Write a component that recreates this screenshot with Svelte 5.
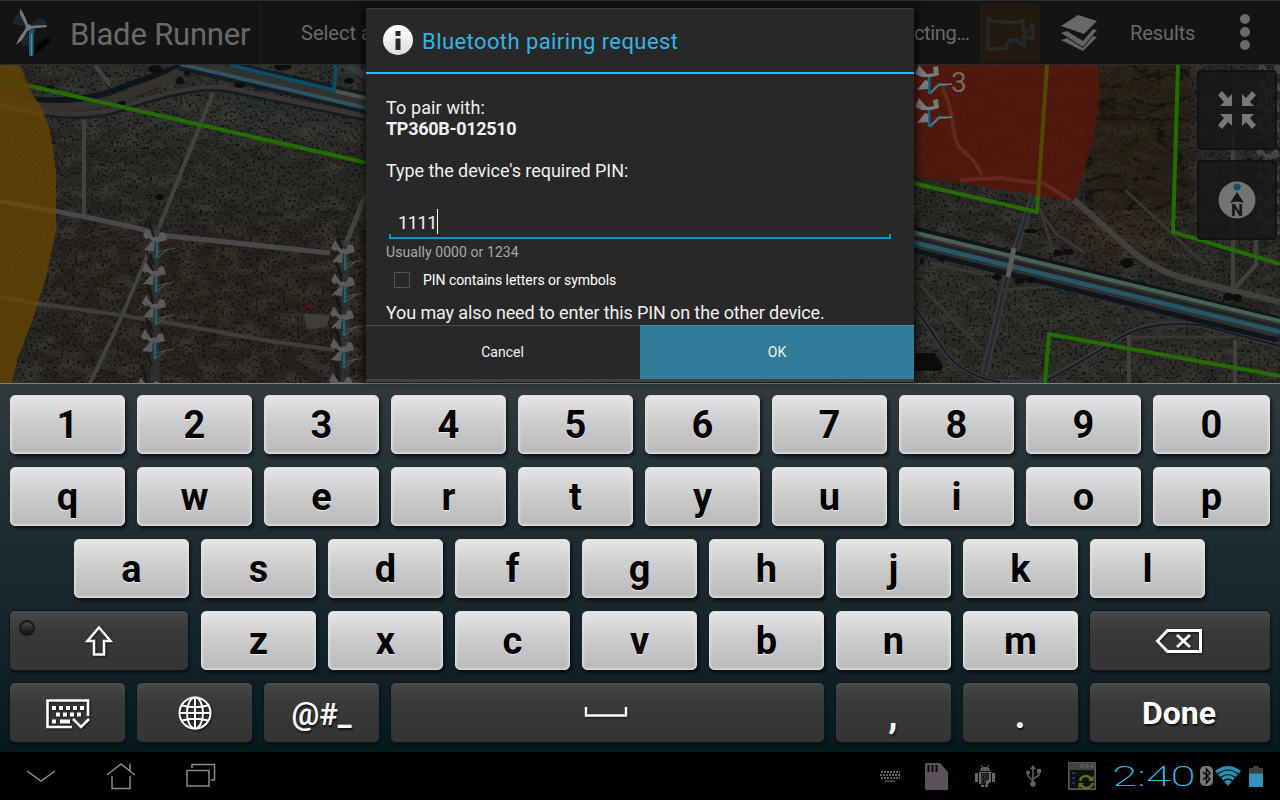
<script>
  const digits = '1234567890'.split('');
  const top = 'qwertyuiop'.split('');
  const home = 'asdfghjkl'.split('');
  const bottom = 'zxcvbnm'.split('');
  const turbines = [
    [155, 233], [154, 267], [154, 300], [153, 334], [149, 382],
    [343, 245], [343, 278], [342, 311], [342, 343], [341, 378]
  ];
  const edgeTurbines = [[1270, 66], [1269, 84], [1268, 104], [1268, 124], [1268, 150], [1268, 174], [1268, 196], [1268, 216]];
  const bushes = [
    [155, 69, 7, 4], [180, 81, 4, 3.5], [187, 73, 3, 2.5], [240, 85, 6, 3], [283, 67, 9, 3], [349, 81, 5, 3],
    [50, 88, 4, 2.5], [122, 103, 4, 2], [160, 197, 4, 3],
    [1031, 231, 7, 2], [1058, 253, 5, 3], [1068, 252, 6, 3], [997, 277, 5, 3], [1020, 281, 5, 3], [1031, 280, 5, 3],
    [1127, 263, 7, 5], [1228, 297, 5, 4], [1237, 298, 5, 4], [942, 259, 4, 2], [922, 261, 2, 4]
  ];
</script>

<div class="screen">
  <header class="appbar">
    <div class="brand">
      <svg class="logo" width="62" height="62" viewBox="0 0 62 62">
        <defs><filter id="soft"><feGaussianBlur stdDeviation="1.4" /></filter></defs>
        <path d="M31 51 48 37" stroke="#050505" stroke-width="5" filter="url(#soft)" />
        <path d="M27 25 12 22Q13 12 20 9ZM28 24 36 17Q44 15 46 23ZM26 27 19 42Q26 45 30 42Z" fill="#20343b" opacity=".6" />
        <path d="M28 29h4.500v24q-2 2-4.500 0z" fill="#19647f" /><path d="M30.500 30v24" stroke="#5c8896" stroke-width="1.200" />
        <path d="M25 24 19 12 19 7 21 9 25 17 27 23ZM28 24 45 23 46 25 36 26 28 27ZM25 26 27 28 21 38 15 43 18 36Z" fill="#777a7b" />
        <circle cx="27.500" cy="25.500" r="3.200" fill="#707476" /><circle cx="31.500" cy="29" r="2.600" fill="#1c4f67" />
      </svg>
      <h1>Blade Runner</h1>
    </div>
    <span class="pick">Select a</span>
    <span class="status">cting…</span>
    <div class="camera">
      <svg width="60" height="60" viewBox="0 0 60 60"><path d="M8 15 12 18 35 20 43 17V26L46 29 51 26V22L53 23V36L46 34 44 32V43L36 37H30L26 42V45L11 46H8Z" fill="none" stroke="#24282b" stroke-width="3.500" stroke-linejoin="round" /></svg>
    </div>
    <svg class="layers" width="38" height="38" viewBox="0 0 38 38">
      <path d="M1 12 18 1 37 7 24 20Z" fill="#686868" />
      <path d="m1 19 6-2 16 10 10-12 4 1-14 17zM1 26l6-2 16 10 10-12 4 1-14 14z" fill="#626262" />
    </svg>
    <span class="results">Results</span>
    <div class="more"><i></i><i></i><i></i></div>
  </header>

  <main class="map">
    <svg width="1280" height="318" viewBox="0 65 1280 318">
      <defs>
        <filter id="dots" x="0" y="0" width="100%" height="100%" color-interpolation-filters="sRGB">
          <feTurbulence type="fractalNoise" baseFrequency=".36" numOctaves="2" seed="8" />
          <feColorMatrix values="0 0 0 0 .06  0 0 0 0 .06  0 0 0 0 .055  6 0 0 0 -3.300" />
        </filter>
        <filter id="light" x="0" y="0" width="100%" height="100%" color-interpolation-filters="sRGB">
          <feTurbulence type="fractalNoise" baseFrequency=".05 .08" numOctaves="5" seed="22" />
          <feColorMatrix values="0 0 0 0 .27  0 0 0 0 .265  0 0 0 0 .235  0 2.500 0 0 -.950" />
        </filter>
        <filter id="ridges" x="0" y="0" width="100%" height="100%" color-interpolation-filters="sRGB">
          <feTurbulence type="turbulence" baseFrequency=".022 .05" numOctaves="4" seed="4" />
          <feColorMatrix values="0 0 0 0 .06  0 0 0 0 .06  0 0 0 0 .05  -7 0 0 0 1.500" />
        </filter>
        <filter id="blur"><feGaussianBlur stdDeviation="9" /></filter>
        <filter id="edge"><feGaussianBlur stdDeviation=".6" /></filter>
        <g id="turbine">
          <path d="M3 24 12 17 20 15M3 19 14 16" stroke="#4b4d4d" stroke-width="1.200" fill="none" />
          <path d="M2 8V25" stroke="#245f7a" stroke-width="2.400" />
          <path d="M-12 3-8-5-5 0-3 3 3 4 6-1 10 0 12 7 4 9-3 8-6 5-9 6ZM-11 17-4 9 0 8-1 18Z" fill="#5a595c" />
          <path d="M-7-16-1 4M-5 20-1 32" stroke="#11171a" stroke-width="1.600" />
        </g>
      </defs>
      <rect y="65" width="1280" height="318" fill="#272622" />
      <g filter="url(#blur)">
        <path d="M55 225H370V383H45Z" fill="#25201b" /><path d="M60 65H370V150L60 130Z" fill="#2b2d2a" />
        <path d="M1090 65h90v170l-80-30z" fill="#272118" /><path d="M914 220 1280 330v53H914z" fill="#292b28" />
        <path d="M1040 210h90l50 40-80 5z" fill="#30281d" />
      </g>
      <rect y="65" width="1280" height="318" filter="url(#light)" opacity=".5" />
      <rect y="65" width="1280" height="318" filter="url(#dots)" opacity=".85" />
      <rect x="1085" y="65" width="105" height="145" fill="#251e12" opacity=".5" />
      <rect x="1085" y="65" width="105" height="145" filter="url(#ridges)" opacity=".8" />

      <g fill="none" filter="url(#edge)">
        <path d="M30 99Q85 105 130 84L185 65" stroke="#11161a" stroke-width="6" />
        <path d="M0 98Q50 114 107 102Q150 88 190 66" stroke="#34332f" stroke-width="8" />
        <path d="M0 104Q65 122 115 110Q190 84 225 88L370 118" stroke="#373631" stroke-width="6" />
        <path d="M0 106Q65 125 115 113Q190 86 225 91L370 121" stroke="#171c20" stroke-width="2.500" />
        <path d="M84 120V215M213 93 160 225 122 316 90 383M95 65 110 85" stroke="#414241" stroke-width="4" />
        <path d="M0 201Q60 211 137 228L160 235 330 253" stroke="#464a48" stroke-width="5" />
        <path d="M35 303 120 315 180 325 270 341 335 350" stroke="#3c3e3c" stroke-width="4" />
        <path d="M365 196 345 246" stroke="#404441" stroke-width="5" />
        <path d="M155 225V383M345 240V383" stroke="#343734" stroke-width="9" opacity=".6" />
        <path d="M345 65 370 78" stroke="#353a3c" stroke-width="6" />
        <path d="M180 60 370 104" stroke="#151d22" stroke-width="21" />
        <path d="M180 60 370 104" stroke="#30312e" stroke-width="10" />
        <path d="M180 64 370 109" stroke="#2d5262" stroke-width="4" />
        <path d="M335 91 370 99" stroke="#44594d" stroke-width="4" />
      </g>
      <path d="M304 314h10l16 1-3 12-20 2z" fill="#3d3e39" /><path d="M306 305h6v3h-6z" fill="#57150f" />
      <path d="M230 65 334 90 336 65" fill="none" stroke="#075069" stroke-width="3.500" />

      <g fill="none" filter="url(#edge)">
        <path d="M1073 199 1138 256Q1160 272 1190 280L1280 302" stroke="#3f413d" stroke-width="6" />
        <path d="M910 300 946 353Q965 377 1000 382H1040Q1060 374 1120 338Q1150 318 1200 325L1280 346" stroke="#33393c" stroke-width="5" />
        <path d="M910 300 946 353Q965 377 1000 382M1042 383Q1070 369 1120 338Q1150 320 1200 325L1280 346" stroke="#171b1d" stroke-width="2" />
        <path d="M984 375 1007 276 1035 190" stroke="#343b3d" stroke-width="7" />
        <path d="M984 375 1007 276 1035 190" stroke="#252b2d" stroke-width="3" />
        <path d="M1129 335V383M1233 130V290M1235 340V383M1256 235V265L1235 288" stroke="#41413e" stroke-width="4" />
        <path d="M1040 208 1053 251M1040 210 1056 234 1085 253M1125 190 1205 264M930 263 985 275M920 285 982 350" stroke="#37362f" stroke-width="3" />
        <path d="M1130 337H1235M1000 290 1055 286" stroke="#353731" stroke-width="3" />
        <path d="M900 236 1280 330" stroke="#0d161b" stroke-width="26" />
        <path d="M900 236 1280 330" stroke="#2e302e" stroke-width="16" />
        <path d="M900 235 1280 327" stroke="#202426" stroke-width="3" />
        <path d="M900 229 1280 321" stroke="#4b6155" stroke-width="4" />
        <path d="M900 239 1280 332" stroke="#285668" stroke-width="4.500" />
        <path d="M1014 248 1008 277" stroke="#5b5d57" stroke-width="5" />
      </g>
      <g fill="#090b09" filter="url(#edge)">
        {#each bushes as [x, y, rx, ry]}<ellipse cx={x} cy={y} {rx} {ry} />{/each}
      </g>
      <path d="M910 353h24l9 12-2 6h-27z" fill="#0c0d0c" />

      <g class="zones">
        <path d="M0 65H20L31 92 42 108 50 130 56 170V231L46 277 33 319 18 357 12 383H0Z" fill="#644304" opacity=".84" />
        <path d="M0 201 56 212M0 297 39 304M0 106 42 115" stroke="#6a5222" stroke-width="4" opacity=".4" />
        <path d="M900 65H1098L1100 96 1093 140 1083 176 1074 201 1050 197 900 174Z" fill="#57160a" opacity=".85" />
        <path d="M942 86Q952 107 953 128L958 146 973 160 982 175M960 180 1000 178 1045 184 1070 200" fill="none" stroke="#773025" stroke-width="4" opacity=".6" />
      </g>
      <g fill="none" stroke="#246c02" stroke-width="4">
        <path d="M30 86 372 164M900 180 1037 212 1038 196M1178 65 1173 232 1280 264M1045 383 1049 334 1280 376" />
        <path d="M0 79 30 86M1038 198 1047 65" stroke="#504803" />
      </g>
      {#each turbines as [x, y]}<use href="#turbine" {x} {y} />{/each}
      <g opacity=".6">{#each edgeTurbines as [x, y]}<use href="#turbine" {x} {y} />{/each}</g>
      <g stroke-linejoin="round">
        {#each [65, 98] as y}
          <g transform={`translate(915 ${y})`}>
            <path d="M14 11V29M15 29 24 19 32 20" fill="none" stroke="#1c6580" stroke-width="2.600" />
            <path d="M0 9 4 0 9 6 12 9 19 8 18 2 23 1 24 10 17 12 7 12ZM2 25 10 15 13 16 13 24Z" fill="#777a7c" />
            <path d="m16 27 8-7 13-1" fill="none" stroke="#74787a" stroke-width="1.400" />
          </g>
        {/each}
      </g>
      <text x="951" y="92" fill="#77665f" font-size="28">3</text>
    </svg>
    <div class="tools">
      <div class="tool">
        <svg width="38" height="38" viewBox="0 0 38 38" fill="#777">
          <path id="corner" d="M0 4 4 0 10 7 14 3V15H2L6 11Z" /><use href="#corner" transform="matrix(-1 0 0 1 38 0)" /><use href="#corner" transform="matrix(1 0 0 -1 0 38)" /><use href="#corner" transform="matrix(-1 0 0 -1 38 38)" />
        </svg>
      </div>
      <div class="tool">
        <svg width="38" height="38" viewBox="0 0 38 38"><circle cx="19" cy="19" r="18.500" fill="#737373" /><circle cx="19" cy="6" r="3.500" fill="#124e70" /><path d="M19 11 26 22Q19 19 12 22Z" fill="#161616" /><text x="19" y="35" text-anchor="middle" font-size="17" font-weight="800" fill="#161616">N</text></svg>
      </div>
    </div>
  </main>

  <section class="keyboard">
    <div class="row">{#each digits as k}<button class="key">{k}</button>{/each}</div>
    <div class="row">{#each top as k}<button class="key">{k}</button>{/each}</div>
    <div class="row home">{#each home as k}<button class="key">{k}</button>{/each}</div>
    <div class="row">
      <button class="key dark shift" aria-label="Shift"><i class="lamp"></i>
        <svg width="28" height="32" viewBox="0 0 28 32"><path d="M14 2.500 25.500 16H19V29.500H9V16H2.500Z" fill="none" stroke="#fff" stroke-width="2.500" /></svg>
      </button>
      {#each bottom as k}<button class="key">{k}</button>{/each}
      <button class="key dark wide back" aria-label="Delete">
        <svg width="48" height="26" viewBox="0 0 48 26" fill="none" stroke="#fff"><path d="M2.500 13 12.500 2.500H45.500V23.500H12.500Z" stroke-width="3" /><path d="m22 7 13 12M35 7 22 19" stroke-width="3" /></svg>
      </button>
    </div>
    <div class="row">
      <button class="key dark" aria-label="Hide keyboard">
        <svg width="44" height="30" viewBox="0 0 44 30" fill="none" stroke="#fff"><path d="M42 17V1.500H1.500V28H26" stroke-width="2.600" /><path d="M6 9H40" stroke-width="4" stroke-dasharray="4 3" /><path d="M10 15.500H36" stroke-width="4" stroke-dasharray="4 3" /><path d="M6 22.500h4M14 22.500h10" stroke-width="4" /><path d="m27 20 8 8 8-8" stroke-width="2.500" /></svg>
      </button>
      <button class="key dark nudge" aria-label="Language">
        <svg width="34" height="34" viewBox="0 0 34 34" fill="none" stroke="#fff" stroke-width="2"><circle cx="17" cy="17" r="15.500" /><ellipse cx="17" cy="17" rx="8" ry="15.500" /><path d="M17 1.500V32.500M1.500 17H32.500M4 9.500Q17 13 30 9.500M4 24.500Q17 21 30 24.500" /></svg>
      </button>
      <button class="key dark symbols">@#_</button>
      <button class="key dark space" aria-label="Space"><svg width="44" height="12" viewBox="0 0 44 12"><path d="M2 1V9.500H42V1" fill="none" stroke="#fff" stroke-width="2.500" /></svg></button>
      <button class="key dark punct">,</button>
      <button class="key dark punct">.</button>
      <button class="key dark wide done">Done</button>
    </div>
  </section>

  <footer class="system">
    <div class="nav">
      <svg width="30" height="28" viewBox="0 0 30 28"><path d="m1 9 14 10L29 9" /></svg>
      <svg width="30" height="28" viewBox="0 0 30 28"><path d="M1 13 15 2 29 13M6 14V26.500H24V14M24 1.500V9" /></svg>
      <svg width="30" height="28" viewBox="0 0 30 28"><path d="M1 8.500H23V24H1ZM6 6V2.500H28.500V18H25" /></svg>
    </div>
    <div class="tray">
      <svg class="kb" width="20" height="12" viewBox="0 0 20 12" stroke="#626262" fill="none" stroke-width="2"><path d="M1 2H20M0 5H20M1 8H20" stroke-dasharray="2 1" /><path d="M5 11H15" stroke-width="1.300" /></svg>
      <svg class="sd" width="23" height="27" viewBox="0 0 23 27"><path d="M0 1 1 0H15L23 9V26L22 27H1L0 26Z" fill="#5b5359" /><path d="M3.500 2V9M7.500 2V9M11.500 2V9" stroke="#080808" stroke-width="2" /></svg>
      <svg class="bot" width="20" height="23" viewBox="0 0 20 23" fill="#666"><path d="M5 6Q5 2 10 2Q15 2 15 6ZM0 8h3v9H0ZM17 8h3v9h-3ZM4 7H16V17L13 19V22H10V19H9V22H6V19H4Z" /><path d="M6 0 8 3M14 0 12 3" stroke="#666" /><path d="M6 8h8v6l-3 2v4H6z" fill="#1b1b1b" /><path d="M7 10h6M6 12h7M7 14h4M6 16h4M7 18h3" stroke="#666" stroke-dasharray="1 2" /><circle cx="8" cy="4.500" r=".6" fill="#000" /><circle cx="12" cy="4.500" r=".6" fill="#000" /></svg>
      <svg class="usb" width="16" height="22" viewBox="0 0 16 22" stroke="#626262" stroke-width="1.500" fill="none"><path d="M7 19V2M7 16 2 11V7M7 14 13 10V6" /><path d="M7 0 10 4H4Z" fill="#626262" stroke="none" /><circle cx="7" cy="19" r="2.700" fill="#626262" stroke="none" /><circle cx="2" cy="7.500" r="2" fill="#626262" stroke="none" /><path d="M11 4h4v4h-4z" fill="#626262" stroke="none" /></svg>
      <svg class="sync" width="28" height="28" viewBox="0 0 28 28"><path d="M.5.500H27.500V27.500H.5Z" fill="#424340" stroke="#575757" /><path d="M2 8H26V26H2Z" fill="#0b1115" /><path d="M4 11h3M4 16h3M4 21h3" stroke="#23384a" stroke-width="2" /><g fill="none" stroke="#686868"><circle cx="14" cy="4" r="1.500" /><circle cx="19" cy="4" r="1.500" /><circle cx="24" cy="4" r="1.500" /></g><path d="M12 19Q13 14 18 14Q21 14 23 17M25 21Q23 26 18 26Q15 26 13 23" fill="none" stroke="#5b721c" stroke-width="2.600" /><path d="M20 19h5.500v-5.500zM16 21h-5.500v5.500z" fill="#5b721c" /></svg>
      <span class="clock">2:40</span>
      <svg class="bt" width="13" height="20" viewBox="0 0 13 20"><rect width="13" height="20" rx="5" fill="#777" /><path d="M3 6 10 13 6.500 17V3L10 7 3 14" fill="none" stroke="#050505" stroke-width="1.300" /></svg>
      <svg class="wifi" width="26" height="20" viewBox="0 0 26 20"><path d="M0 5Q13-5 26 5L13 20Z" fill="#2c8eb5" /><path d="M2 8.500Q13-.5 24 8.500M5 12Q13 5 21 12M8 15.500Q13 11 18 15.500" fill="none" stroke="#000" stroke-width="1.200" /></svg>
      <svg class="battery" width="14" height="21" viewBox="0 0 14 21"><path d="M4 0h6v2h4v6H0V2h4z" fill="#3d3d3d" /><path d="M0 7.500H14V21H0Z" fill="#3092ba" /></svg>
    </div>
  </footer>

  <div class="dialog">
    <div class="head">
      <svg width="30" height="30" viewBox="0 0 30 30"><defs><linearGradient id="ball" x2="0" y2="1"><stop stop-color="#fff" /><stop offset="1" stop-color="#ddd" /></linearGradient></defs><circle cx="15" cy="15" r="15" fill="url(#ball)" /><path d="M12.500 6h5v5h-5zM12.500 13.500h5V25h-5z" fill="#282828" /></svg>
      <h2>Bluetooth pairing request</h2>
    </div>
    <div class="body">
      <p class="to">To pair with:</p>
      <p class="device">TP360B-012510</p>
      <p class="ask">Type the device's required PIN:</p>
      <div class="field"><span>1111</span><i></i></div>
      <p class="hint">Usually 0000 or 1234</p>
      <div class="check"><i></i><span>PIN contains letters or symbols</span></div>
      <p class="note">You may also need to enter this PIN on the other device.</p>
    </div>
    <div class="actions"><button>Cancel</button><button class="ok">OK</button></div>
  </div>
</div>

<style>
  :global(body) { margin: 0; background: #000; }
  .screen { position: relative; width: 1280px; height: 800px; overflow: hidden; display: flex; flex-direction: column; font-family: Roboto, sans-serif; background: #000; }
  button { border: 0; padding: 0; margin: 0; font-family: inherit; }
  h1, h2, p { margin: 0; font-weight: 400; }
  svg { display: block; flex: none; }

  .appbar { box-sizing: border-box; height: 65px; flex: none; display: flex; align-items: center; background: #141414; border-top: 1px solid #2c2c2c; border-bottom: 1px solid #2d2d2d; color: #696969; font-size: 20px; white-space: nowrap; }
  .brand { display: flex; align-items: center; width: 260px; height: 61px; border-right: 1px solid #202020; }
  .logo { margin-left: 1px; }
  h1 { font-size: 31px; margin-left: 7px; padding-top: 3px; letter-spacing: -.2px; }
  .pick { margin-left: 40px; width: 613px; }
  .status { width: 66px; letter-spacing: -.35px; }
  .camera { width: 60px; height: 60px; border-radius: 4px; background: #23190f; }
  .layers { margin-left: 20px; }
  .results { margin-left: 32px; width: 66px; letter-spacing: -.1px; }
  .more { display: flex; flex-direction: column; gap: 3px; margin-left: 44px; margin-top: -2px; }
  .more i { width: 10px; height: 10px; border-radius: 50%; background: #696969; }

  .map { position: relative; height: 318px; flex: none; overflow: hidden; }
  .tools { position: absolute; right: 3px; top: 5px; display: flex; flex-direction: column; gap: 10px; }
  .tool { box-sizing: border-box; width: 80px; height: 80px; border: 2px solid rgba(18, 18, 18, .85); border-radius: 4px; background: rgba(22, 22, 22, .82); display: flex; align-items: center; justify-content: center; }

  .keyboard { box-sizing: border-box; height: 369px; flex: none; padding: 11px 10px 0; border-top: 1px solid #7d8385; background: linear-gradient(#303a3d, #223034 28%, #17272d 60%, #06191f); display: flex; flex-direction: column; gap: 13px; }
  .row { display: flex; gap: 12px; height: 59px; }
  .home { padding-left: 64px; }
  .key { box-sizing: border-box; width: 115px; height: 59px; flex: none; display: flex; align-items: center; justify-content: center; border-radius: 5px; background: linear-gradient(#e6e3e5, #cbcbcb 50%, #b9b9b9); border: 1px solid #dcdcdc; box-shadow: inset 0 0 3px #ececec, 2px 3px 3px rgba(0, 0, 0, .55); color: #000; font-size: 38px; font-weight: 700; line-height: 59px; padding-top: 2px; text-shadow: 0 1px 1px #eee; }
  .row .key:nth-child(10) { width: 117px; }
  .dark { background: linear-gradient(#484848, #383938 35%, #343434); border: 0; box-shadow: inset 0 1px 0 #4c4c4c, 0 0 0 1px #0c1517, 1px 3px 3px rgba(0, 0, 0, .5); color: #fff; text-shadow: 1px 2px 2px #111; }
  .dark svg { filter: drop-shadow(1px 1px 1px #111); }
  .shift { position: relative; width: 178px; margin-right: 1px; padding-top: 1px; }
  .lamp { position: absolute; left: 9px; top: 9px; width: 12px; height: 12px; border-radius: 50%; border: 2px solid #171919; background: linear-gradient(#454847, #111); }
  .wide { width: 180px; }
  .back { padding: 1px 2px 0 0; }
  .nudge { padding-top: 1px; }
  .space { width: 433px; padding: 0 3px 2px 0; }
  .done { font-size: 32px; padding-right: 2px; }
  .symbols { font-size: 31px; font-weight: 600; padding: 4px 0 0; }
  .punct { font-size: 38px; padding-top: 6px; padding-right: 1px; }

  .system { height: 48px; flex: none; display: flex; justify-content: space-between; align-items: center; background: #000; }
  .nav { display: flex; gap: 50px; padding-left: 26px; fill: none; stroke: #8b8b8b; stroke-width: 1.500; }
  .tray { display: flex; align-items: center; padding-right: 17px; }
  .sd { margin-left: 25px; } .bot { margin-left: 27px; } .usb { margin-left: 31px; } .sync { margin-left: 26px; }
  .clock { display: flex; justify-content: center; width: 80px; margin-left: 18px; color: #30b5e5; font-size: 28.5px; font-weight: 200; line-height: 28px; transform: translateY(1px) scaleX(1.580); }
  .bt { margin-left: 6px; } .wifi { margin-left: 2px; } .battery { margin-left: 8px; }

  .dialog { position: absolute; left: 366px; top: 9px; width: 548px; height: 370px; display: flex; flex-direction: column; background: #282828; color: #f0f0f0; box-shadow: 0 -1px 0 #3c3c3c, 0 3px 0 #424242, 0 0 7px 3px rgba(0, 0, 0, .6); }
  .head { box-sizing: border-box; height: 65px; flex: none; display: flex; align-items: center; gap: 9px; padding: 0 0 1px 17px; border-bottom: 2px solid #33b5e5; }
  h2 { color: #33b5e5; font-size: 22px; line-height: 28px; padding-top: 3px; letter-spacing: .42px; }
  .body { flex: 1; min-height: 0; padding: 23px 20px 0; font-size: 18px; line-height: 21px; white-space: nowrap; }
  .to { letter-spacing: .12px; }
  .device { font-weight: 700; letter-spacing: -.3px; }
  .ask { margin-top: 21px; letter-spacing: -.05px; }
  .field { box-sizing: border-box; height: 30px; width: 502px; margin: 28px 0 0 3px; padding-left: 9px; display: flex; align-items: flex-start; background: linear-gradient(#0099cc, #0099cc) left bottom / 2px 5px no-repeat, linear-gradient(#0099cc, #0099cc) right bottom / 2px 5px no-repeat, linear-gradient(#0099cc, #0099cc) bottom / 100% 2px no-repeat; }
  .field span { padding-top: 3px; letter-spacing: -.4px; }
  .field i { width: 1px; height: 25px; background: #fff; }
  .hint { font-size: 14px; line-height: 20px; margin-top: 3px; color: #a8a8a8; letter-spacing: .08px; }
  .check { display: flex; align-items: center; height: 20px; margin: 8px 0 0 8px; font-size: 14px; color: #fff; letter-spacing: -.05px; }
  .check i { width: 14px; height: 14px; border: 1px solid #555; margin-right: 13px; }
  .note { margin-top: 12px; letter-spacing: -.125px; }
  .actions { height: 54px; flex: none; display: flex; }
  .actions button { box-sizing: border-box; width: 274px; border-top: 1px solid #4a4a4a; background: #282828; color: #f0f0f0; font-size: 14px; padding: 0 1px 1px 0; }
  .actions .ok { background: #317c99; border-color: #3d8ba9; padding-right: 0; }
</style>
